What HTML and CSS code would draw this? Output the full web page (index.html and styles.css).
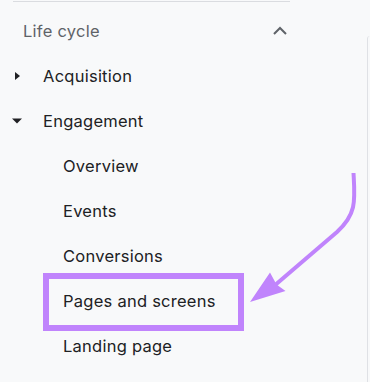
FILE: index.html
```html
<!DOCTYPE html>
<html>
<head>
<meta charset="utf-8">
<link rel="stylesheet" href="styles.css">
</head>
<body>
<div class="page">
  <nav class="nav">
    <div class="section">
      <span class="section-title">Life cycle</span>
      <svg class="chevron" width="16" height="10" viewBox="0 0 16 10"><path d="M2 8 L8 2 L14 8" fill="none" stroke="#5f6368" stroke-width="2"/></svg>
    </div>
    <div class="item">
      <span class="caret"><svg width="10" height="10" viewBox="0 0 10 10"><path d="M3 1 L8 5 L3 9 Z" fill="#202124"/></svg></span>
      <span>Acquisition</span>
    </div>
    <div class="item">
      <span class="caret"><svg width="10" height="10" viewBox="0 0 10 10"><path d="M0 2.5 L10 2.5 L5 7.5 Z" fill="#202124"/></svg></span>
      <span>Engagement</span>
    </div>
    <div class="sub">Overview</div>
    <div class="sub">Events</div>
    <div class="sub">Conversions</div>
    <div class="sub highlighted">Pages and screens</div>
    <div class="sub">Landing page</div>
  </nav>
  <div class="panel"></div>
  <svg class="arrow" width="370" height="382" viewBox="0 0 370 382">
    <path d="M353.5 173 C 355 200, 357 214, 337 232 L 274 286" fill="none" stroke="#c084fc" stroke-width="4" stroke-linejoin="round"/>
    <path d="M250 302 L270 272.5 L276.5 284.5 L285.5 291 Z" fill="#c084fc"/>
  </svg>
</div>
</body>
</html>
```

FILE: styles.css
```css
html, body {
  margin: 0;
  padding: 0;
  background: #f8f9fa;
}

.page {
  position: relative;
  width: 370px;
  height: 382px;
  display: flex;
  overflow: hidden;
  font-family: Inter, "Open Sans", sans-serif;
  font-size: 16.5px;
  letter-spacing: 0.25px;
  color: #202124;
}

.nav {
  margin-left: 13px;
  margin-top: 1px;
  width: 277px;
  border-top: 1px solid #dadce0;
  display: flex;
  flex-direction: column;
  padding-top: 6px;
}

.section {
  height: 45px;
  display: flex;
  align-items: center;
  justify-content: space-between;
  padding-left: 10px;
  padding-right: 2px;
}

.section-title {
  color: #5f6368;
}

.chevron {
  display: block;
}

.item {
  height: 45px;
  display: flex;
  align-items: center;
  gap: 21px;
}

.caret {
  width: 10px;
  height: 10px;
  margin-left: -1px;
  margin-top: 1px;
  display: flex;
}

.caret svg {
  display: block;
}

.sub {
  height: 45px;
  display: flex;
  align-items: center;
  padding-left: 50px;
}

.highlighted {
  position: relative;
}

.highlighted::before {
  content: "";
  position: absolute;
  left: 30px;
  top: -5px;
  width: 189px;
  height: 46px;
  border: 6px solid #c084fc;
}

.panel {
  margin-left: 77px;
  margin-top: 36px;
  flex: 1;
  border-left: 1px solid #dfe1e5;
  border-top-left-radius: 8px;
}

.arrow {
  position: absolute;
  left: 0;
  top: 0;
  pointer-events: none;
}
```
